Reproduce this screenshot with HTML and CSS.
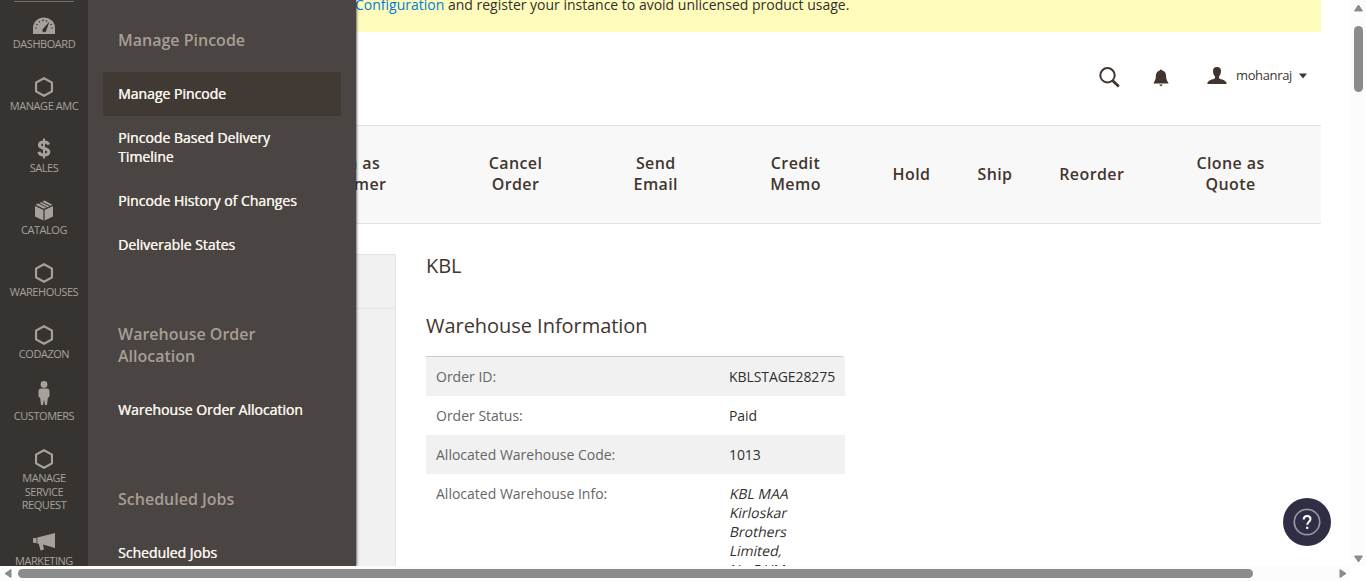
FILE: index.html
```html
<!DOCTYPE html>
<html lang="en">
<head>
<meta charset="utf-8">
<title>KBL Order</title>
<link rel="stylesheet" href="styles.css">
</head>
<body>
<svg class="defs" aria-hidden="true">
  <symbol id="hex" viewBox="0 0 18 20"><path d="M9 1.200 17 5.600v8.800L9 18.800 1 14.400V5.600z" fill="none" stroke="currentColor" stroke-width="2.200"/></symbol>
</svg>
<div class="window">
  <div class="viewport">
    <nav class="sidebar">
      <a class="nav-item"><svg class="nav-icon" width="22" height="20" viewBox="0 -1 22 20"><path d="M0 18v-6a11 10.500 0 0 1 22 0v6z" fill="currentColor"/><g fill="#373330"><circle cx="3" cy="12" r=".8"/><circle cx="4" cy="8.500" r=".8"/><circle cx="6.500" cy="5.700" r=".8"/><circle cx="10" cy="4.400" r=".8"/><circle cx="13.500" cy="5" r=".8"/><circle cx="19" cy="12" r=".8"/><circle cx="18" cy="8.500" r=".8"/><path d="M16.500 5.500 13.300 14.500a2 2 0 1 1-3-2z"/></g></svg><span>DASHBOARD</span></a>
      <a class="nav-item"><svg class="nav-icon" width="18" height="20"><use href="#hex"/></svg><span>MANAGE AMC</span></a>
      <a class="nav-item raised"><svg class="nav-icon" width="14" height="21" viewBox="0 0 14 20"><path d="M11.600 6.200C11.200 4.400 9.400 3.500 7 3.500 4.300 3.500 2.500 4.700 2.500 6.500c0 4.600 9.300 2.200 9.300 6.800 0 2-2 3.200-4.800 3.200-2.900 0-4.700-1.200-5-3.300" fill="none" stroke="currentColor" stroke-width="3.100"/><path d="M7 0v20" stroke="currentColor" stroke-width="2"/></svg><span>SALES</span></a>
      <a class="nav-item raised"><svg class="nav-icon" width="18" height="21" viewBox="0 0 18 20"><g fill="currentColor"><path d="M0 5.500 8.400 9.400V20L0 16z"/><path d="M18 5.500 9.600 9.400V20l8.400-4z"/><path d="m.6 4.300 2.600-1.200 8.300 4L9 8.300zM4.300 2.600 6.200 1.700l8.300 4-1.900 1zM7.300 1.200 9.500.1l7.900 4.200-1.900.9z"/></g></svg><span>CATALOG</span></a>
      <a class="nav-item"><svg class="nav-icon" width="18" height="20"><use href="#hex"/></svg><span>WAREHOUSES</span></a>
      <a class="nav-item"><svg class="nav-icon" width="18" height="20"><use href="#hex"/></svg><span>CODAZON</span></a>
      <a class="nav-item customers"><svg class="nav-icon" width="12" height="24" viewBox="0 0 12 24"><g fill="currentColor"><circle cx="6" cy="3.400" r="3.400"/><path d="M2.800 7.500h6.400Q11.500 7.700 11.500 10v5.500L9.800 17 9 24H7L6 18.500 5 24H3L2.200 17 .5 15.500V10q0-2.300 2.300-2.500z"/></g></svg><span>CUSTOMERS</span></a>
      <a class="nav-item service"><svg class="nav-icon" width="18" height="20"><use href="#hex"/></svg><span>MANAGE SERVICE REQUEST</span></a>
      <a class="nav-item marketing"><svg class="nav-icon" width="22" height="20" viewBox="0 0 22 20"><g fill="currentColor"><path d="M0 6.300 3.500 5.800v5.400L0 10.700zM4.300 5.600 22 1v15L10 12.500l1 5-3.500 1L5.800 12l-1.500-.5z"/></g></svg><span>MARKETING</span></a>
    </nav>
    <aside class="flyout">
      <section class="group">
        <h2>Manage Pincode</h2>
        <a class="active">Manage Pincode</a>
        <a>Pincode Based Delivery Timeline</a>
        <a>Pincode History of Changes</a>
        <a>Deliverable States</a>
      </section>
      <section class="group">
        <h2>Warehouse Order Allocation</h2>
        <a>Warehouse Order Allocation</a>
      </section>
      <section class="group">
        <h2>Scheduled Jobs</h2>
        <a>Scheduled Jobs</a>
      </section>
    </aside>
    <main class="page">
      <div class="notice"><p><a>Configuration</a> and register your instance to avoid unlicensed product usage.</p></div>
      <header class="header">
        <svg class="search" width="21" height="21" viewBox="0 0 21 21"><g fill="none" stroke="currentColor"><circle cx="8.500" cy="8.300" r="7.200" stroke-width="2"/><path d="m13.500 13.500 6.300 6" stroke-width="2.800"/></g></svg>
        <svg class="bell" width="16" height="18" viewBox="0 0 16 18"><path d="M8 .5q1 0 1.300 1C12.500 2.300 13 5 13.200 8c.1 2.500 1 4 2.500 6.500H.3C1.800 12 2.700 10.500 2.800 8 3 5 3.500 2.300 6.700 1.500Q7 .5 8 .5zM6.300 15.500h3.400q-.4 1.500-1.700 1.500t-1.700-1.500z" fill="currentColor"/></svg>
        <div class="user">
          <svg width="20" height="18" viewBox="0 0 20 18"><path d="M10 0c2.700 0 4.200 1.500 4 4.300-.1 2.500-1 4.300-2 5.200v1.800c2 1.500 7.600 1.500 7.600 5.700H.4c0-4.200 5.600-4.200 7.600-5.700V9.500C7 8.600 6.100 6.800 6 4.300 5.800 1.500 7.300 0 10 0z" fill="currentColor"/></svg>
          <span>mohanraj</span>
          <svg width="8" height="6" viewBox="0 0 8 6"><path d="M0 .5h8L4 5.500z" fill="currentColor"/></svg>
        </div>
      </header>
      <div class="toolbar">
        <button>Login as<br>Customer</button>
        <button>Cancel<br>Order</button>
        <button>Send<br>Email</button>
        <button>Credit<br>Memo</button>
        <button>Hold</button>
        <button>Ship</button>
        <button>Reorder</button>
        <button>Clone as<br>Quote</button>
      </div>
      <div class="columns">
        <div class="side-tabs"><div class="side-title"></div></div>
        <div class="details">
          <h1>KBL</h1>
          <h3>Warehouse Information</h3>
          <table class="info">
            <tr><th>Order ID:</th><td>KBLSTAGE28275</td></tr>
            <tr><th>Order Status:</th><td>Paid</td></tr>
            <tr><th>Allocated Warehouse Code:</th><td>1013</td></tr>
            <tr><th>Allocated Warehouse Info:</th><td><address><span>KBL MAA</span><span>Kirloskar</span><span>Brothers</span><span>Limited,</span><span>No.5 VM</span></address></td></tr>
          </table>
        </div>
      </div>
    </main>
    <div class="help"><svg width="48" height="48" viewBox="0 0 48 48"><circle cx="24" cy="24" r="12.700" fill="none" stroke="#98979f" stroke-width="1.700"/><path d="M20.700 21.500c0-2.200 1.400-3.500 3.400-3.500s3.400 1.300 3.400 3.100c0 2.500-3.300 2.700-3.300 5.700" fill="none" stroke="#fff" stroke-width="2"/><path d="M23.100 28.700h2.200v2.200h-2.200z" fill="#fff"/></svg></div>
  </div>
  <div class="vbar"><svg width="9" height="8" viewBox="0 0 9 8"><path d="M4.500 1 8.500 7h-8z" fill="#8b8b8b" stroke="#8b8b8b" stroke-linejoin="round"/></svg><i class="thumb"></i><svg class="end" width="9" height="8" viewBox="0 0 9 8"><path d="M4.500 7 .5 1h8z" fill="#8b8b8b" stroke="#8b8b8b" stroke-linejoin="round"/></svg></div>
  <div class="hbar"><svg width="8" height="9" viewBox="0 0 8 9"><path d="M1 4.500 7 .5v8z" fill="#8b8b8b" stroke="#8b8b8b" stroke-linejoin="round"/></svg><i class="thumb"></i><svg class="end" width="8" height="9" viewBox="0 0 8 9"><path d="M7 4.500 1 .5v8z" fill="#8b8b8b" stroke="#8b8b8b" stroke-linejoin="round"/></svg></div>
</div>
</body>
</html>
```
FILE: styles.css
```css
* { box-sizing: border-box; }
body { margin: 0; font-family: "Open Sans", sans-serif; font-size: 14px; line-height: 19px; color: #303030; background: #fff; }
h1, h2, h3, p { margin: 0; }
.defs { position: absolute; width: 0; height: 0; }
.window { display: grid; grid-template-columns: 1351px 15px; grid-template-rows: 566px 15px; width: 1366px; height: 581px; overflow: hidden; }
.viewport { position: relative; display: flex; overflow: hidden; }

.sidebar { width: 88px; flex: none; background: #373330; color: #a6a29b; overflow: hidden; }
.sidebar::before { content: ""; display: block; width: 60px; height: 1px; margin: 1px auto 0; background: #736e69; }
.nav-item { display: flex; flex-direction: column; align-items: center; height: 62px; padding-top: 13px; font-size: 11px; line-height: 13.5px; letter-spacing: -.45px; text-align: center; }
.nav-icon { display: block; flex: none; margin-bottom: 2px; }
.nav-item span { width: 80px; }
.raised { padding-top: 12px; }
.customers { padding-top: 7px; }
.customers .nav-icon { margin-bottom: 4px; }
.service { height: 89px; }
.nav-item.service span { width: 60px; }
.marketing { padding-top: 7px; }

.flyout { position: absolute; left: 88px; top: 0; width: 268px; height: 566px; padding: 29px 15px 0; background: #4a4542; box-shadow: 0 0 3px #000; clip-path: inset(0 -5px 0 0); }
.group { margin-bottom: 56px; }
.group h2 { padding: 0 40px 0 15px; margin-bottom: 21px; font-size: 16px; line-height: 22px; font-weight: 600; color: #a79d95; }
.group a { display: block; padding: 12px 15px 13px; font-size: 14px; line-height: 19px; font-weight: 400; text-shadow: .4px 0 #f7f3eb; color: #f7f3eb; }
.group .active { background: #403934; }

.page { width: 1263px; padding-right: 30px; }
.notice { display: flow-root; height: 32px; background: #fffbbb; padding-left: 267px; }
.notice p { margin-top: -5px; line-height: 20px; white-space: nowrap; }
.notice a { color: #007bdb; }
.header { height: 93px; display: flex; align-items: center; justify-content: flex-end; padding: 0 14px 2px 0; color: #41362f; }
.bell { margin-left: 33.5px; }
.user { display: flex; align-items: center; margin: 0 0 4px 37.5px; font-size: 13px; letter-spacing: -.35px; }
.user span { margin: 0 7px 0 9px; }
.toolbar { height: 99px; display: grid; grid-template-columns: 174px 163px 117.5px 162px 70px 97px 96.5px 181px; padding-left: 172px; background: #f8f8f8; border-top: 1px solid #e3e3e3; border-bottom: 1px solid #e3e3e3; }
.toolbar button { border: 0; padding: 0 0 1px; background: none; font: 600 16px/21px "Open Sans", sans-serif; letter-spacing: .4px; color: #41362f; }
.columns { display: flex; padding-top: 30px; }
.side-tabs { width: 308px; height: 320px; flex: none; background: #f1f1f1; border: 1px solid #e3e3e3; }
.side-title { height: 54px; border-bottom: 1px solid #e3e3e3; }
.details { padding-left: 30px; width: 449px; flex: none; }
.details h1, .details h3 { font-size: 20px; line-height: 24px; font-weight: 400; letter-spacing: -.04px; color: #41362f; }
.details h3 { margin: 36px 2px 0 0; padding-bottom: 18px; border-bottom: 1px solid #cacaca; }
.info { width: 419px; border-collapse: collapse; table-layout: fixed; }
.info th { width: 293px; font-weight: 400; text-align: left; color: #666; }
.info th, .info td { padding: 10px; vertical-align: top; }
.info td { letter-spacing: -.08px; }
.info tr:nth-child(odd) { background: #f1f1f1; }
.info address { font-style: normal; letter-spacing: 0; }
.info address span { display: block; transform: skewX(-12deg); transform-origin: 0 15px; }

.help { position: absolute; left: 1283px; top: 498px; width: 48px; height: 48px; border-radius: 50%; background: #2f2e44; }
.vbar, .hbar { display: flex; align-items: center; background: #fcfcfc; }
.vbar { flex-direction: column; padding: 4px 0 3px; }
.thumb { background: #8b8b8b; border-radius: 5px; }
.vbar .thumb { width: 9px; height: 66px; margin-top: 14px; }
.vbar .end { margin-top: auto; }
.hbar { width: 1351px; padding: 0 4px; }
.hbar .thumb { height: 9px; width: 1235px; margin-left: 6px; }
.hbar .end { margin-left: auto; }
```
